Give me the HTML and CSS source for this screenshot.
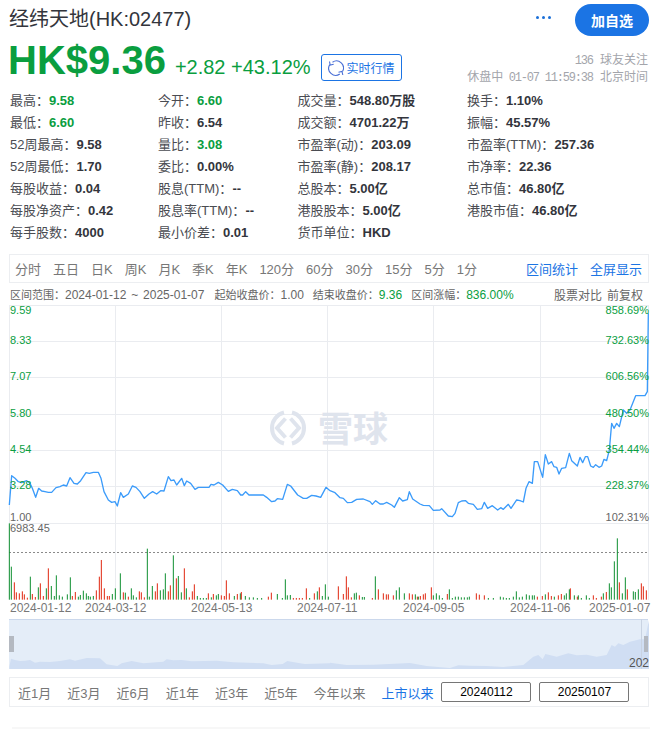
FILE: index.html
```html
<!DOCTYPE html>
<html lang="zh-CN">
<head>
    <meta charset="UTF-8">
    <title>经纬天地(HK:02477)</title>
    <link rel="stylesheet" href="styles.css">
</head>
<body>
    <div class="header">
        <h1 class="stock-name">经纬天地(HK:02477)</h1>
        <div class="more"><i></i><i></i><i></i></div>
        <button class="follow-btn">加自选</button>
    </div>

    <div class="quote">
        <span class="price">HK$9.36</span>
        <span class="change">+2.82 +43.12%</span>
        <a class="realtime-btn">
            <svg width="16" height="18" viewBox="0 0 16 18" fill="none" stroke="#4a6fd6" stroke-width="1.1">
                <path d="M4.500 3.200A7 7 0 0 1 14.500 12.500"/>
                <path d="M11.800 15A7 7 0 0 1 1.800 5.600"/>
                <path d="M1.500 2.500L2.200 6L5.700 5.300"/>
                <path d="M14.800 16L14 12.500L10.500 13.200"/>
            </svg>
            实时行情
        </a>
        <div class="meta">
            <div><span class="mono">136</span> 球友关注</div>
            <div>休盘中 <span class="mono">01-07 11:59:38</span> 北京时间</div>
        </div>
    </div>

    <div class="stats">
        <div>最高：<b class="up">9.58</b></div>
        <div>今开：<b class="up">6.60</b></div>
        <div>成交量：<b>548.80万股</b></div>
        <div>换手：<b>1.10%</b></div>
        <div>最低：<b class="up">6.60</b></div>
        <div>昨收：<b>6.54</b></div>
        <div>成交额：<b>4701.22万</b></div>
        <div>振幅：<b>45.57%</b></div>
        <div>52周最高：<b>9.58</b></div>
        <div>量比：<b class="up">3.08</b></div>
        <div>市盈率(动)：<b>203.09</b></div>
        <div>市盈率(TTM)：<b>257.36</b></div>
        <div>52周最低：<b>1.70</b></div>
        <div>委比：<b>0.00%</b></div>
        <div>市盈率(静)：<b>208.17</b></div>
        <div>市净率：<b>22.36</b></div>
        <div>每股收益：<b>0.04</b></div>
        <div>股息(TTM)：<b>--</b></div>
        <div>总股本：<b>5.00亿</b></div>
        <div>总市值：<b>46.80亿</b></div>
        <div>每股净资产：<b>0.42</b></div>
        <div>股息率(TTM)：<b>--</b></div>
        <div>港股股本：<b>5.00亿</b></div>
        <div>港股市值：<b>46.80亿</b></div>
        <div>每手股数：<b>4000</b></div>
        <div>最小价差：<b>0.01</b></div>
        <div>货币单位：<b>HKD</b></div>
    </div>

    <div class="period-bar">
        <span>分时</span><span>五日</span><span>日K</span><span>周K</span><span>月K</span><span>季K</span><span>年K</span>
        <span>120分</span><span>60分</span><span>30分</span><span>15分</span><span>5分</span><span>1分</span>
        <a class="period-link first">区间统计</a>
        <a class="period-link">全屏显示</a>
    </div>

    <div class="range-info">
        <span class="range-dates">区间范围：<em>2024-01-12 ~ 2025-01-07</em></span>
        <span>起始收盘价：<em>1.00</em></span>
        <span>结束收盘价：<em class="up">9.36</em></span>
        <span>区间涨幅：<em class="up">836.00%</em></span>
        <span class="range-right">股票对比</span>
        <span class="range-adjust">前复权</span>
    </div>

    <svg class="chart" width="659" height="314" viewBox="0 305 659 314">
        <g class="grid">
            <path d="M9 305.500H648M9 341.500H648M9 377.500H648M9 414.500H648M9 450.500H648M9 486.500H648M9 523.500H648"/>
            <path d="M9.500 305V600M115.500 305V600M221.500 305V600M327.500 305V600M433.500 305V600M540.500 305V600M648.500 305V600"/>
        </g>

        <g class="watermark">
            <path d="M284 412.500A16 16 0 0 0 284 443.500"/>
            <path d="M292 443.500A16 16 0 0 0 292 412.500"/>
            <path d="M285.500 418.500L277 428L285.500 437.500"/>
            <path d="M290.500 418.500L299 428L290.500 437.500"/>
            <text x="318" y="442">雪球</text>
        </g>

        <path class="avg-line" d="M9 552.500H648"/>

        <!-- volume bars, traced at 3x: x, top y -->
        <g transform="translate(0 450) scale(0.33333)">
            <path class="bar-green" d="M28 220V449M34 350V449M91 380V449M115 412V449M139 415V449M154 408V449M169 376V449M163 438V449M178 436V449M187 440V449M202 433V449M211 382V449M235 440V449M241 435V449M250 422V449M259 430V449M265 438V449M271 440V449M280 438V449M337 432V449M346 415V449M361 370V449M376 428V449M394 415V449M400 436V449M409 442V449M442 296V449M448 440V449M457 408V449M481 421V449M490 418V449M496 370V449M520 316V449M535 378V449M544 427V449M559 415V449M592 438V449M601 444V449M610 444V449M619 444V449M634 442V449M649 436V449M655 432V449M703 438V449M721 430V449M736 438V449M748 442V449M760 442V449M772 444V449M785 444V449M832 432V449M847 444V449M856 388V449M862 436V449M871 435V449M929 444V449M952 424V449M967 438V449M976 403V449M985 440V449"/>
            <path class="bar-red" d="M43 397V449M49 427V449M58 430V449M67 424V449M73 433V449M82 443V449M97 432V449M106 441V449M121 400V449M130 438V449M145 355V449M217 438V449M226 426V449M289 421V449M298 380V449M304 330V449M313 415V449M322 438V449M328 438V449M370 427V449M385 440V449M418 424V449M424 427V449M433 442V449M466 424V449M472 400V449M505 424V449M511 406V449M529 385V449M553 355V449M568 442V449M577 424V449M583 403V449M625 430V449M640 432V449M664 436V449M673 438V449M679 391V449M688 430V449M712 432V449M724 426V449M805 440V449M814 428V449M880 444V449M889 444V449M898 444V449M907 444V449M919 415V449M943 430V449M958 412V449"/>
        </g>
        <g transform="translate(330 450) scale(0.33333)">
            <path class="bar-red" d="M25 409V449M40 432V449M49 379V449M55 412V449M64 442V449M88 436V449M127 444V449M145 418V449M160 430V449M169 433V449M175 433V449M190 436V449M238 430V449M247 433V449M262 440V449M271 438V449M280 433V449M286 430V449M304 412V449M352 432V449M439 430V449M448 434V449M463 436V449M622 440V449M637 438V449M655 427V449M664 438V449M685 436V449M694 432V449M721 415V449M742 440V449M790 436V449M799 444V449M814 440V449M829 426V449M868 397V449M892 418V449M934 400V449M940 409V449M949 421V449"/>
            <path class="bar-green" d="M73 430V449M79 428V449M97 441V449M103 441V449M136 379V449M199 421V449M208 412V449M223 430V449M256 433V449M265 440V449M310 436V449M319 430V449M328 436V449M337 444V449M358 418V449M367 444V449M376 440V449M385 440V449M394 442V449M403 442V449M412 442V449M418 440V449M475 444V449M490 444V449M511 440V449M520 442V449M529 444V449M538 444V449M550 440V449M559 424V449M568 442V449M577 440V449M589 433V449M598 436V449M607 436V449M613 436V449M646 433V449M673 440V449M703 436V449M709 430V449M718 418V449M733 436V449M745 436V449M754 444V449M769 436V449M778 444V449M820 430V449M838 400V449M844 412V449M853 334V449M862 265V449M877 430V449M886 382V449M910 424V449M916 426V449M925 418V449"/>
        </g>

        <!-- price line -->
        <g transform="translate(0 450) scale(0.33333)">
            <polyline class="price-line" points="28,165 35,77 45,85 55,95 65,98 72,95 80,92 90,100 97,115 107,142 116,115 125,123 135,125 145,127 155,127 168,113 180,110 190,105 200,108 210,83 222,100 232,102 242,92 258,68 268,70 280,67 295,67 303,85 312,125 325,150 335,157 345,155 352,168 362,128 370,142 385,132 397,108 408,112 420,125 433,145 447,132 458,125 470,132 482,122 492,123 505,80 513,92 522,90 530,105 545,85 553,107 560,93 572,100 585,118 595,112 627,112 633,103 642,105 655,97 668,105 685,124 697,118 712,122 722,135 728,135 737,125 747,135 790,135 800,142 815,155 825,153 832,146 848,148 862,103 872,108 893,135 910,145 920,145 935,136 948,138 962,142 978,112 990,122"/>
        </g>
        <g transform="translate(330 450) scale(0.33333)">
            <polyline class="price-line" points="0,122 15,128 30,143 40,145 52,158 65,157 80,148 100,147 120,155 127,163 137,152 150,162 160,162 170,157 185,165 193,172 208,143 218,153 232,149 238,125 248,147 270,162 280,166 298,167 310,181 330,180 335,176 355,198 367,200 375,190 385,158 395,153 407,152 415,160 430,163 442,178 455,176 463,157 473,175 487,167 503,180 512,173 520,178 535,163 543,175 560,150 570,152 580,156 588,115 597,95 607,100 613,35 623,35 638,82 646,14 655,42 665,35 672,50 680,52 687,72 695,55 707,53 718,10 725,32 742,48 750,22 758,38 766,20 773,20 782,48 790,52 797,44 807,52 815,48 822,28 830,32 838,0"/>
        </g>
        <g transform="translate(330 250) scale(0.33333)">
            <polyline class="price-line" points="838,600 845,520 852,535 860,520 868,530 880,480 890,490 900,480 917,437 945,437 952,425 955,190"/>
        </g>

        <g class="axis-up">
            <text x="10" y="314">9.59</text>
            <text x="10" y="344">8.33</text>
            <text x="10" y="380">7.07</text>
            <text x="10" y="417">5.80</text>
            <text x="10" y="453">4.54</text>
            <text x="10" y="489">3.28</text>
            <text class="end" x="649" y="314">858.69%</text>
            <text class="end" x="649" y="344">732.63%</text>
            <text class="end" x="649" y="380">606.56%</text>
            <text class="end" x="649" y="417">480.50%</text>
            <text class="end" x="649" y="453">354.44%</text>
            <text class="end" x="649" y="489">228.37%</text>
        </g>
        <g class="axis-gray">
            <text x="10" y="521">1.00</text>
            <text class="end" x="649" y="521">102.31%</text>
            <text x="10" y="532">6983.45</text>
        </g>
        <g class="axis-dates">
            <text x="10" y="612">2024-01-12</text>
            <text x="85" y="612">2024-03-12</text>
            <text x="191" y="612">2024-05-13</text>
            <text x="297" y="612">2024-07-11</text>
            <text x="403" y="612">2024-09-05</text>
            <text x="510" y="612">2024-11-06</text>
            <text x="589" y="612">2025-01-07</text>
        </g>
    </svg>

    <svg class="navigator" width="659" height="50" viewBox="0 619 659 50">
        <rect class="nav-bg" x="9" y="619" width="639" height="50"/>
        <path class="nav-top" d="M9 619.500H648"/>
        <g transform="translate(0 600) scale(0.33333)">
            <polygon class="nav-area" points="28,207 28,200 33,176 45,180 60,183 75,182 90,180 105,188 120,185 150,186 180,183 210,178 225,182 260,174 300,175 320,193 352,198 365,190 395,183 430,190 470,187 490,185 500,178 520,181 545,180 575,184 650,182 700,187 790,190 815,195 848,192 862,183 900,190 915,192 990,190 990,207"/>
        </g>
        <g transform="translate(330 600) scale(0.33333)">
            <polygon class="nav-area" points="0,207 0,188 50,195 130,194 240,189 290,198 360,204 385,196 420,197 470,198 520,201 580,195 610,170 625,165 638,178 646,162 680,170 715,160 740,166 770,164 800,170 830,165 845,135 855,140 865,130 880,135 900,125 930,118 945,118 957,60 957,207"/>
        </g>
        <path class="nav-edge" d="M641.500 619V669"/>
        <rect class="nav-handle" x="9" y="636" width="5" height="16"/>
        <rect class="nav-handle" x="644" y="636" width="4" height="16"/>
        <text class="nav-label" x="629" y="667">202</text>
    </svg>

    <div class="range-bar">
        <span>近1月</span><span>近3月</span><span>近6月</span><span>近1年</span><span>近3年</span><span>近5年</span><span>今年以来</span>
        <a class="range-active">上市以来</a>
        <input class="date-input" type="text" value="20240112">
        <input class="date-input" type="text" value="20250107">
    </div>

    <div class="bottom-strip"></div>
</body>
</html>
```

FILE: styles.css
```css
* {
    margin: 0;
    padding: 0;
    box-sizing: border-box;
}

body {
    width: 659px;
    height: 729px;
    overflow: hidden;
    background: #fff;
    font-family: "Liberation Sans", "Noto Sans CJK SC", sans-serif;
    color: #33353c;
}

.up {
    color: #0a9e3f;
}

.header {
    display: flex;
    align-items: center;
    height: 32px;
    margin-top: 4px;
    padding: 0 10px 0 9px;
}

.stock-name {
    font-size: 20px;
    font-weight: normal;
    line-height: 30px;
    margin-top: -2px;
}

.more {
    display: flex;
    gap: 3px;
    margin-left: auto;
    margin-right: 24px;
    margin-top: -6px;
}

.more i {
    width: 3px;
    height: 3px;
    border-radius: 50%;
    background: #1a6fd8;
}

.follow-btn {
    width: 74px;
    height: 32px;
    border: none;
    border-radius: 16px;
    background: #1b74e4;
    color: #fff;
    font-family: inherit;
    font-size: 14px;
    font-weight: bold;
}

.quote {
    display: flex;
    align-items: baseline;
    height: 53px;
    padding: 1px 11px 0 8px;
}

.price {
    font-size: 40px;
    font-weight: bold;
    line-height: 46px;
    color: #0a9e3f;
}

.change {
    margin-left: 9px;
    font-size: 20px;
    color: #0a9e3f;
}

.realtime-btn {
    display: flex;
    align-items: center;
    gap: 3px;
    align-self: flex-end;
    height: 27px;
    margin: 0 0 8px 10px;
    padding: 0 6px 0 6px;
    border: 1px solid #1b74e4;
    border-radius: 3px;
    font-size: 12px;
    color: #1b74e4;
}

.meta {
    align-self: flex-end;
    margin-left: auto;
    margin-bottom: 3px;
    text-align: right;
    font-size: 12px;
    line-height: 16px;
    color: #a3a5ab;
}

.mono {
    font-family: "Liberation Mono", monospace;
    letter-spacing: -1.2px;
    margin: 0 4px 0 2px;
}

.stats {
    display: grid;
    grid-template-columns: 148px 139.5px 169.5px 1fr;
    grid-auto-rows: 22px;
    height: 155px;
    padding: 1px 0 0 10px;
    font-size: 13px;
    line-height: 22px;
    color: #4a4c52;
}

.stats b {
    color: #33353c;
}

.stats b.up {
    color: #0a9e3f;
}

.period-bar {
    display: flex;
    align-items: center;
    gap: 12px;
    height: 29px;
    margin: 10px 10px 0 9px;
    padding: 0 6px 1px 5px;
    border: 1px solid #eceef1;
    font-size: 13px;
    color: #777;
}

.period-link {
    color: #1b74e4;
}

.period-link.first {
    margin-left: auto;
}

.range-info {
    display: flex;
    align-items: center;
    height: 22px;
    padding: 0 16px 0 10px;
    font-size: 11px;
    color: #666;
}

.range-info span {
    margin-right: 9px;
    white-space: nowrap;
}

.range-info .range-dates {
    margin-right: 10px;
}

.range-info em {
    font-style: normal;
    font-size: 12px;
}

.range-dates em {
    word-spacing: 1.5px;
}

.range-info .range-right {
    margin-left: auto;
    margin-right: 5px;
    font-size: 12px;
}

.range-info .range-adjust {
    margin-right: 0;
    font-size: 12px;
}

.chart,
.navigator {
    display: block;
}

.grid path {
    fill: none;
    stroke: #eaecf0;
    stroke-width: 1;
}

.watermark path {
    fill: none;
    stroke: #dfe4ed;
    stroke-width: 4;
}

.chart .watermark text {
    font-size: 35px;
    font-weight: bold;
    fill: #dfe4ed;
}

.avg-line {
    fill: none;
    stroke: #8a8a8a;
    stroke-width: 1;
    stroke-dasharray: 2 2;
}

.bar-green,
.bar-red {
    fill: none;
    stroke-width: 3;
}

.bar-green {
    stroke: #0e8f2f;
}

.bar-red {
    stroke: #e0260f;
}

.price-line {
    fill: none;
    stroke: #3b9bfa;
    stroke-width: 4;
    stroke-linejoin: round;
}

.chart text {
    font-size: 11px;
}

.chart .end {
    text-anchor: end;
}

.axis-up text {
    fill: #0a9e3f;
}

.axis-gray text {
    fill: #666;
}

.chart .axis-dates text {
    font-size: 12px;
    fill: #777;
}

.nav-bg {
    fill: #e4edf8;
}

.nav-top {
    stroke: #cbd8ec;
    stroke-width: 1;
}

.nav-area {
    fill: #d0def3;
}

.nav-edge {
    stroke: #c9d3e2;
    stroke-width: 1;
}

.nav-handle {
    fill: #b4b9c1;
}

.nav-label {
    font-size: 12px;
    fill: #555;
}

.range-bar {
    display: flex;
    align-items: center;
    gap: 16px;
    height: 30px;
    margin: 8px 10px 0 9px;
    padding-left: 8px;
    border: 1px solid #eceef1;
    font-size: 13px;
    color: #777;
}

.range-active {
    color: #1b74e4;
}

.date-input {
    width: 90px;
    height: 20px;
    margin-left: -8px;
    border: 1px solid #767676;
    border-radius: 2px;
    font-family: inherit;
    font-size: 12px;
    text-align: center;
    color: #000;
    background: #fff;
}

.bottom-strip {
    height: 2px;
    margin: 20px 9px 0 12px;
    background: #f7f7f7;
}
```
